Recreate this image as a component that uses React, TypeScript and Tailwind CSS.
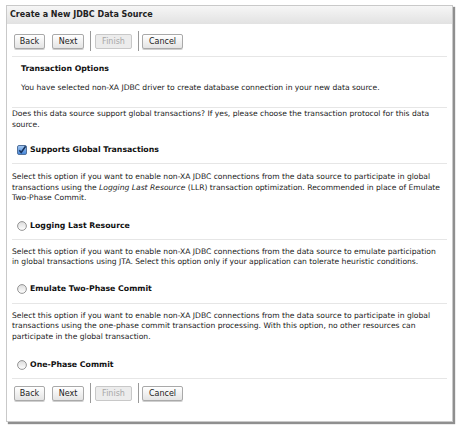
import React from "react";

const btn =
  "h-[15px] rounded-[2px] border border-[#a9a9a9] bg-gradient-to-b from-[#ffffff] to-[#e4e4e4] px-[4px] text-[8px] leading-[13px] text-[#222] shadow-[0_1px_0_#cfcfcf]";

function ButtonRow() {
  return (
    <div className="flex items-center h-[20px] pl-[7px]">
      <button className={btn + " w-[31px]"}>Back</button>
      <button className={btn + " ml-[7px] w-[32px]"}>Next</button>
      <div className="ml-[6px] h-[20px] w-px bg-[#9a9a9a]" />
      <button className="ml-[4px] h-[15px] w-[37px] rounded-[2px] border border-[#c8c8c8] bg-[#ececec] text-[8px] leading-[13px] text-[#a8a8a8]">
        Finish
      </button>
      <div className="ml-[6px] h-[20px] w-px bg-[#9a9a9a]" />
      <button className={btn + " ml-[3px] w-[41px]"}>Cancel</button>
    </div>
  );
}

function Checkbox() {
  return (
    <svg width="10" height="10" viewBox="0 0 10 10" className="shrink-0">
      <defs>
        <linearGradient id="cb" x1="0" y1="0" x2="0" y2="1">
          <stop offset="0" stopColor="#a6c9f2" />
          <stop offset="1" stopColor="#4384d8" />
        </linearGradient>
      </defs>
      <rect x="0.5" y="0.5" width="9" height="9" rx="1.5" fill="url(#cb)" stroke="#52729c" />
      <path d="M2.3 5.2 L4.2 7.4 L8.6 1.2" fill="none" stroke="#17335e" strokeWidth="1.6" />
    </svg>
  );
}

function Radio() {
  return (
    <svg width="10" height="10" viewBox="0 0 10 10" className="shrink-0">
      <defs>
        <linearGradient id="rd" x1="0" y1="0" x2="0" y2="1">
          <stop offset="0" stopColor="#dcdcdc" />
          <stop offset="1" stopColor="#ffffff" />
        </linearGradient>
      </defs>
      <circle cx="5" cy="5" r="4.4" fill="url(#rd)" stroke="#8a8a8a" strokeWidth="0.9" />
    </svg>
  );
}

function Option({ icon, label }: { icon: React.ReactNode; label: string }) {
  return (
    <div className="flex items-center gap-[3px] pl-[10px] h-[12px]">
      {icon}
      <span className="text-[7.8px] font-bold text-[#111]">{label}</span>
    </div>
  );
}

const Hr = () => <div className="mx-[5px] h-px bg-[#e6e6e6]" />;

const para = "whitespace-nowrap pl-[5px] text-[7.6px] leading-[10.5px] text-[#222]";

export default function App() {
  return (
    <div
      className="h-[427px] w-[461px] bg-white"
      style={{ fontFamily: '"DejaVu Sans", Verdana, sans-serif' }}
    >
      <div className="ml-[6px] mt-[5px] h-[417px] w-[447px] border border-[#c9c9c9] bg-white shadow-[2px_2px_1px_#8f8f8f]">
        {/* Title */}
        <div className="h-[18px] bg-gradient-to-b from-[#f6f6f6] to-[#e2e2e2] pl-[3px] text-[8px] font-bold leading-[18px] text-[#222]">
          Create a New JDBC Data Source
        </div>

        <div className="pt-[7px]">
          <ButtonRow />
        </div>

        <div className="mt-[5px]"><Hr /></div>

        <div className="pl-[14px] pt-[7px] text-[7.8px] font-bold text-[#111] leading-[10px]">
          Transaction Options
        </div>
        <div className="whitespace-nowrap pl-[14px] pt-[9px] pb-[14px] text-[7.6px] leading-[10px] text-[#222]">
          You have selected non-XA JDBC driver to create database connection in your new data source.
        </div>
        <Hr />

        <p className={para + " pt-[1px]"}>
          Does this data source support global transactions? If yes, please choose the transaction protocol for this data
          <br />
          source.
        </p>
        <div className="pt-[14px] pb-[7px]">
          <Option icon={<Checkbox />} label="Supports Global Transactions" />
        </div>
        <Hr />

        <p className={para + " pt-[8px]"}>
          Select this option if you want to enable non-XA JDBC connections from the data source to participate in global
          <br />
          transactions using the <i>Logging Last Resource</i> (LLR) transaction optimization. Recommended in place of Emulate
          <br />
          Two-Phase Commit.
        </p>
        <div className="pt-[16px] pb-[7px]">
          <Option icon={<Radio />} label="Logging Last Resource" />
        </div>
        <Hr />

        <p className={para + " pt-[7px]"}>
          Select this option if you want to enable non-XA JDBC connections from the data source to emulate participation
          <br />
          in global transactions using JTA. Select this option only if your application can tolerate heuristic conditions.
        </p>
        <div className="pt-[15px] pb-[8px]">
          <Option icon={<Radio />} label="Emulate Two-Phase Commit" />
        </div>
        <Hr />

        <p className={para + " pt-[7px]"}>
          Select this option if you want to enable non-XA JDBC connections from the data source to participate in global
          <br />
          transactions using the one-phase commit transaction processing. With this option, no other resources can
          <br />
          participate in the global transaction.
        </p>
        <div className="pt-[17px] pb-[7px]">
          <Option icon={<Radio />} label="One-Phase Commit" />
        </div>
        <Hr />

        <div className="pt-[4px]">
          <ButtonRow />
        </div>
      </div>
    </div>
  );
}
